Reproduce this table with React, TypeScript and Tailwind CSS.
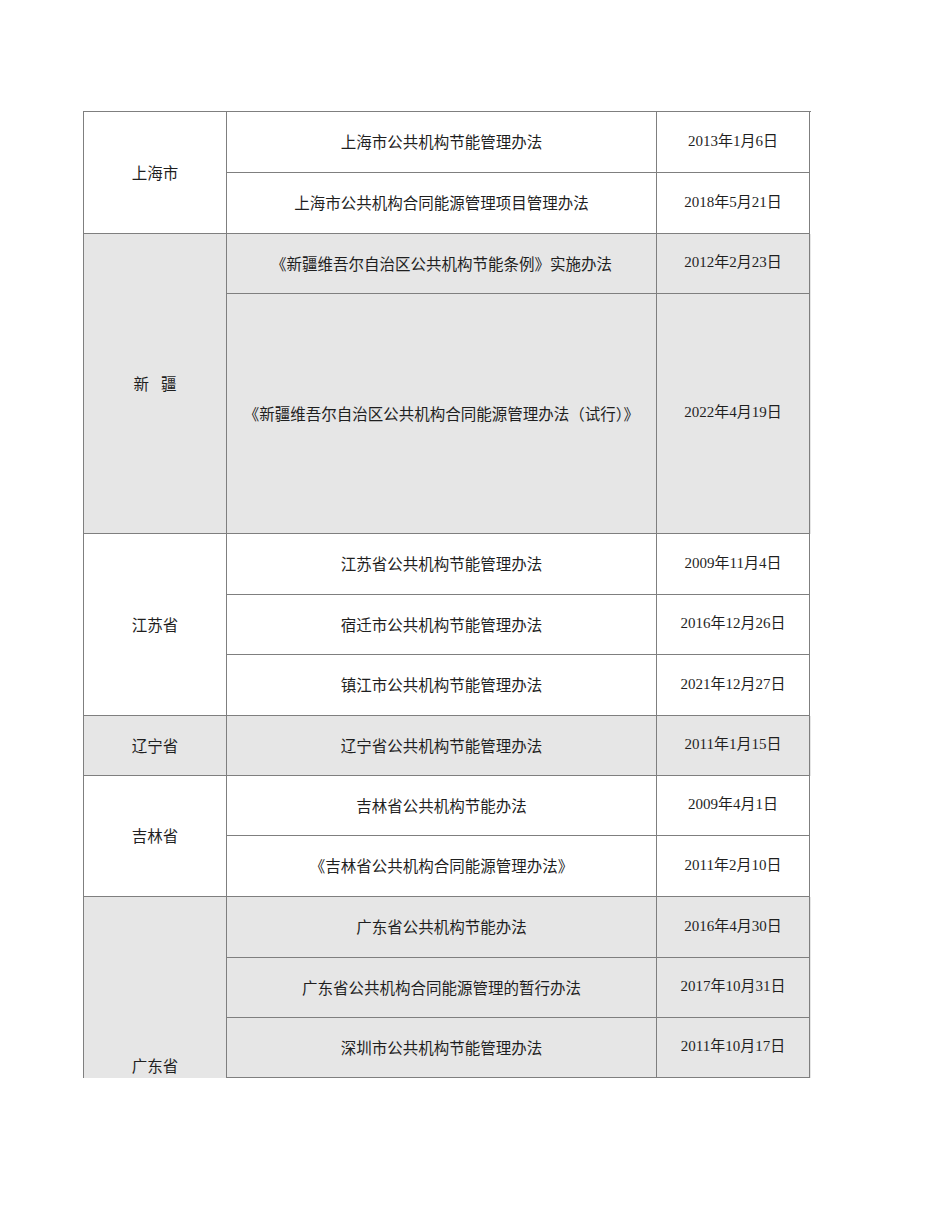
const cjk = "font-['Noto_Sans_CJK_SC',sans-serif]";
const dateFont = "font-['Liberation_Serif','Noto_Sans_CJK_SC',serif]";

type Row = { title: string; date: string; h: string };
type Group = { region: React.ReactNode; shaded: boolean; rows: Row[]; clipped?: boolean };

const groups: Group[] = [
  {
    region: '上海市',
    shaded: false,
    rows: [
      { title: '上海市公共机构节能管理办法', date: '2013年1月6日', h: 'h-[61px]' },
      { title: '上海市公共机构合同能源管理项目管理办法', date: '2018年5月21日', h: 'h-[61px]' },
    ],
  },
  {
    region: (
      <>
        新<span className="inline-block w-[12px]" />疆
      </>
    ),
    shaded: true,
    rows: [
      { title: '《新疆维吾尔自治区公共机构节能条例》实施办法', date: '2012年2月23日', h: 'h-[60px]' },
      { title: '《新疆维吾尔自治区公共机构合同能源管理办法（试行）》', date: '2022年4月19日', h: 'h-[240px]' },
    ],
  },
  {
    region: '江苏省',
    shaded: false,
    rows: [
      { title: '江苏省公共机构节能管理办法', date: '2009年11月4日', h: 'h-[61px]' },
      { title: '宿迁市公共机构节能管理办法', date: '2016年12月26日', h: 'h-[60px]' },
      { title: '镇江市公共机构节能管理办法', date: '2021年12月27日', h: 'h-[61px]' },
    ],
  },
  {
    region: '辽宁省',
    shaded: true,
    rows: [{ title: '辽宁省公共机构节能管理办法', date: '2011年1月15日', h: 'h-[60px]' }],
  },
  {
    region: '吉林省',
    shaded: false,
    rows: [
      { title: '吉林省公共机构节能办法', date: '2009年4月1日', h: 'h-[60px]' },
      { title: '《吉林省公共机构合同能源管理办法》', date: '2011年2月10日', h: 'h-[61px]' },
    ],
  },
  {
    region: '广东省',
    shaded: true,
    clipped: true,
    rows: [
      { title: '广东省公共机构节能办法', date: '2016年4月30日', h: 'h-[61px]' },
      { title: '广东省公共机构合同能源管理的暂行办法', date: '2017年10月31日', h: 'h-[60px]' },
      { title: '深圳市公共机构节能管理办法', date: '2011年10月17日', h: 'h-[60px]' },
    ],
  },
];

function RegionGroup({ group }: { group: Group }) {
  const bg = group.shaded ? 'bg-[#e6e6e6]' : 'bg-white';
  return (
    <div className={`flex ${bg}`}>
      <div
        className={`w-[143px] shrink-0 flex justify-center border-l border-[#7f7f7f] text-[15.5px] text-[#1f1f1f] ${cjk} ${
          group.clipped ? 'items-end pb-[1px]' : 'items-center border-b'
        }`}
      >
        <span>{group.region}</span>
      </div>
      <div className="flex flex-col">
        {group.rows.map((row) => (
          <div key={row.title} className={`flex ${row.h}`}>
            <div
              className={`w-[430px] flex items-center justify-center border-l border-b border-[#7f7f7f] text-[15.5px] text-[#1f1f1f] ${cjk}`}
            >
              {row.title}
            </div>
            <div
              className={`w-[154px] flex items-center justify-center border-l border-r border-b border-[#7f7f7f] text-[15px] text-[#1f1f1f] pb-[2px] ${dateFont}`}
            >
              {row.date}
            </div>
          </div>
        ))}
      </div>
    </div>
  );
}

export default function App() {
  return (
    <div className="w-[950px] h-[1230px] bg-white pt-[111px] pl-[83px]">
      <div className="w-[728px] border-t border-[#7f7f7f]">
        {groups.map((g, i) => (
          <RegionGroup key={i} group={g} />
        ))}
      </div>
    </div>
  );
}
